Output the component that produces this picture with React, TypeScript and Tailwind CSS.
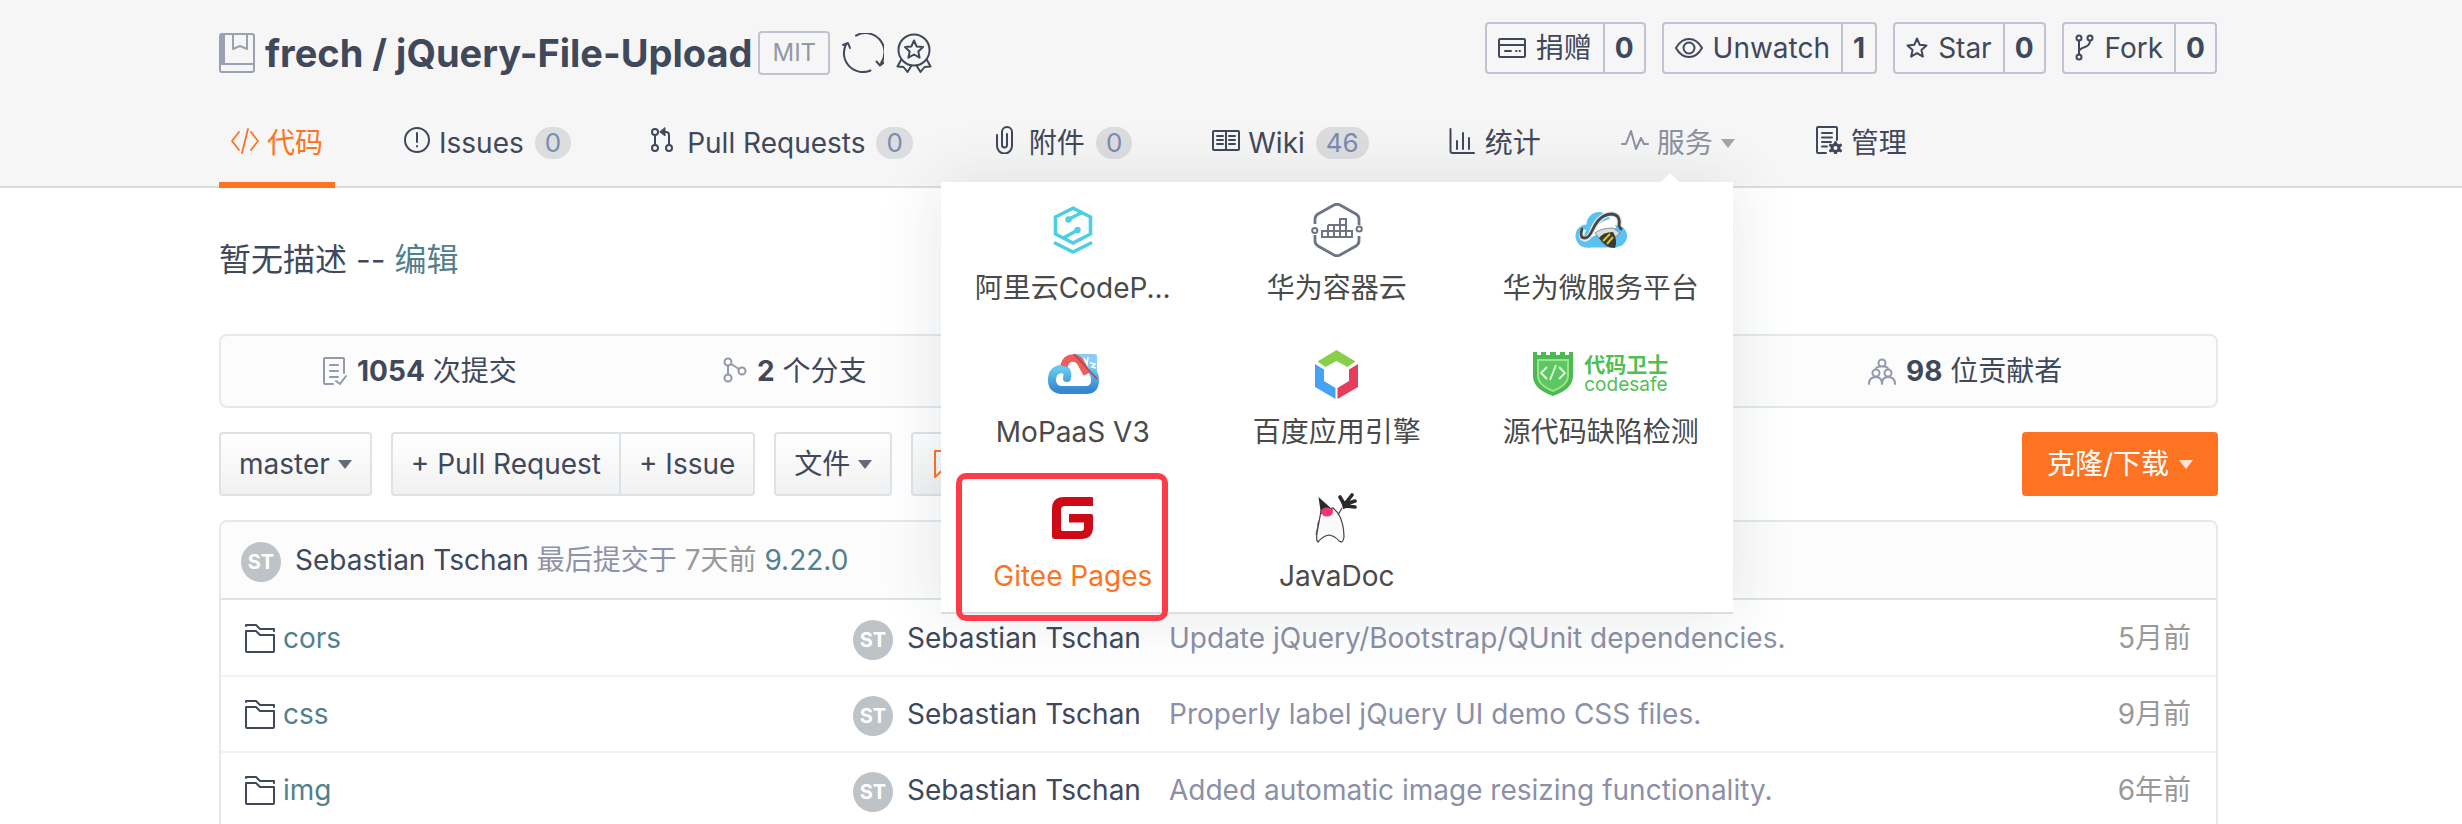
import type { ReactNode } from 'react';

const star = (cx: number, cy: number, outer: number, inner: number) =>
  Array.from({ length: 10 }, (_, i) => {
    const r = i % 2 === 0 ? outer : inner;
    const a = (Math.PI / 5) * i - Math.PI / 2;
    return `${(cx + r * Math.cos(a)).toFixed(1)},${(cy + r * Math.sin(a)).toFixed(1)}`;
  }).join(' ');

function Icon({ children, size = 28, height }: { children: ReactNode; size?: number; height?: number }) {
  return (
    <svg
      width={size}
      height={height ?? size}
      viewBox={`0 0 ${size} ${height ?? size}`}
      fill="none"
      stroke="currentColor"
      strokeWidth="2"
      strokeLinecap="round"
      strokeLinejoin="round"
      className="shrink-0"
      aria-hidden="true"
    >
      {children}
    </svg>
  );
}

const Caret = () => (
  <svg width="14" height="9" viewBox="0 0 14 9" className="shrink-0 opacity-80" aria-hidden="true">
    <path d="M0 0h14L7 9Z" fill="currentColor" />
  </svg>
);

const RepoIcon = () => (
  <Icon size={36} height={40}>
    <path d="M3 1h30a2 2 0 0 1 2 2v34a2 2 0 0 1-2 2H3a2 2 0 0 1-2-2V3a2 2 0 0 1 2-2ZM1 31h34M14 1v15l7-3 7 3V1" />
    <path d="M1 2h5v28H1Z" fill="currentColor" stroke="none" />
  </Icon>
);

const SyncIcon = () => (
  <Icon size={42} height={40}>
    <path d="M14 2.600A19 19 0 0 1 39 30M28.500 37.500A19 19 0 0 1 4.500 10.500M1 12l5-2 2 5M34.500 28.500l3.500 4 4.500-3.500" />
  </Icon>
);

const MedalIcon = () => (
  <Icon size={36} height={40}>
    <circle cx="18" cy="17" r="15.500" />
    <polygon points={star(18, 17, 9.5, 4.5)} />
    <path d="M5 27 1.500 33.500l6 .5 4 5 4-6.500M31 27l3.500 6.500-6 .5-4 5-4-6.500" />
  </Icon>
);

const CodeIcon = () => (
  <Icon>
    <path d="M8 6 1 15l7 9M20 6l7 9-7 9M17 3l-6 24" strokeWidth="1.800" />
  </Icon>
);

const IssueIcon = () => (
  <Icon>
    <circle cx="14" cy="14" r="12" />
    <path d="M14 7v9M14 20v.5" />
  </Icon>
);

const PullIcon = () => (
  <Icon>
    <circle cx="4" cy="6" r="3" />
    <circle cx="4" cy="22" r="3" />
    <circle cx="18" cy="22" r="3" />
    <path d="M4 9v10M18 19V9q0-3-3-3h-5" />
    <path d="M14 2v8L9 6Z" fill="currentColor" strokeWidth="1" />
  </Icon>
);

const ClipIcon = () => (
  <Icon>
    <path d="M4 9v11a7.500 7.500 0 0 0 15 0V6a5 5 0 0 0-10 0v13a2.500 2.500 0 0 0 5 0V8" />
  </Icon>
);

const BookIcon = () => (
  <Icon>
    <rect x="1" y="5" width="26" height="19" rx="1" />
    <path d="M14 5v19M5 10h6M5 14h6M5 18h6M17 10h6M17 14h6M17 18h6" />
  </Icon>
);

const ChartIcon = () => (
  <Icon>
    <path d="M1.500 3v22q0 2 2 2H25M8 15v8M14 7v16M20 12v11" />
  </Icon>
);

const PulseIcon = () => (
  <Icon>
    <path d="M1 18h4l5-13 5 18 5-11 3 6h4" />
  </Icon>
);

const ManageIcon = () => (
  <Icon>
    <path d="M11 27H3q-1 0-1-1V2q0-1 1-1h18q1 0 1 1v12M7 7h10M7 11.500h10M7 16h9M7 20.500h5" />
    <circle cx="20.500" cy="22" r="3.500" strokeWidth="3" />
    <path
      d="M20.500 17v-.5M20.500 27.500V27M16 19.500l-.5-.3M25.500 24.800l-.5-.3M16 24.500l-.5.3M25.500 19.200l-.5.3"
      strokeWidth="3"
    />
  </Icon>
);

const DonateIcon = () => (
  <Icon>
    <rect x="1" y="5" width="26" height="18" rx="1" />
    <path d="M1 11h26M7 17h6M18 17h.5M21.500 17h.5" />
  </Icon>
);

const EyeIcon = () => (
  <Icon>
    <path d="M1 14Q6 5 14 5t13 9q-5 9-13 9T1 14Z" />
    <circle cx="14" cy="14" r="5.500" />
  </Icon>
);

const StarIcon = () => (
  <Icon size={22} height={28}>
    <polygon points={star(11, 14.5, 10, 4.6)} />
  </Icon>
);

const ForkIcon = () => (
  <Icon size={20} height={28}>
    <circle cx="4" cy="4" r="2.500" />
    <circle cx="15" cy="4" r="2.500" />
    <circle cx="4" cy="23" r="2.500" />
    <path d="M4 6.500v14M15 6.500q0 5-5 6.500t-6 4" />
  </Icon>
);

const CommitIcon = () => (
  <Icon size={24} height={28}>
    <path d="M10 27H2q-1 0-1-1V2q0-1 1-1h18q1 0 1 1v14M7 8h8M7 14h8M7 20h8M13 24l4 3 6-8" />
  </Icon>
);

const BranchIcon = () => (
  <Icon size={24} height={28}>
    <circle cx="5" cy="5" r="3.500" />
    <circle cx="5" cy="21" r="3.500" />
    <circle cx="19" cy="14" r="3.500" />
    <path d="M5 8.500v9M8 7l8 5" />
  </Icon>
);

const PeopleIcon = () => (
  <Icon>
    <circle cx="14" cy="6" r="3.500" />
    <circle cx="8" cy="16" r="3.500" />
    <circle cx="20" cy="16" r="3.500" />
    <path d="M1 27q0-7 7-7 6 0 6 7 0-7 6-7 7 0 7 7M8 12q0-2 4-2.500M20 12q0-2-4-2.500" />
  </Icon>
);

const FolderIcon = () => (
  <Icon size={30}>
    <path d="M1 8h10l4 4h14v16q0 1-1 1H2q-1 0-1-1ZM1 3V2h10l4 4h14v2" />
  </Icon>
);

const AliyunLogo = () => (
  <svg width="40" height="48" viewBox="0 0 40 48" fill="none" stroke="#4cd0e1" strokeWidth="3.600">
    <path d="M20 2.200 37.500 11v17L20 37 2.500 28V11ZM15 13.500 29 6.500M24 24.500 11 31.500M1 36.500 20 46l19-9.500" />
    <circle cx="15.500" cy="13.500" r="3.200" fill="#4cd0e1" stroke="none" />
    <circle cx="24.500" cy="24" r="3.200" fill="#4cd0e1" stroke="none" />
  </svg>
);

const ContainerLogo = () => (
  <svg width="52" height="54" viewBox="0 0 52 54" fill="none" stroke="#6e7486" strokeWidth="2.800">
    <path d="M4 21v-5q0-3 3-5l16-9q3-1.500 6 0l16 9q3 2 3 5v6M4 32v6q0 3 3 5l16 9q3 1.500 6 0l16-9q3-2 3-5v-5" />
    <g strokeWidth="2">
      <circle cx="3.800" cy="27.500" r="2.600" />
      <circle cx="48.200" cy="26" r="2.600" />
      <path d="M11 28h30v6H11ZM17 22h18v12M17 22v12M23 22v12M29 34V16h6v18M29 22h6" />
    </g>
  </svg>
);

const BeeLogo = () => (
  <svg width="52" height="38" viewBox="0 0 52 38">
    <g fill="#5bc1f0">
      <circle cx="12" cy="25" r="11.500" />
      <circle cx="24" cy="13.500" r="12.500" />
      <circle cx="41" cy="25" r="11" />
      <path d="M12 20h30v16.500H12Z" />
    </g>
    <path d="M15 27q5-15 19-19 6 1 7 9l-10 3-10 4Z" fill="#fff" />
    <path d="M9 18q-5 9 1 10 4 0 8-10 7-15 19-15 9 1 7 12" fill="none" stroke="#e6e9ec" strokeWidth="5.500" />
    <path
      d="M7 18q-3 9 3 9 4 0 8-9 7-15 19-15 9 1 7 12l2 3"
      fill="none"
      stroke="#474747"
      strokeWidth="2.800"
      strokeLinecap="round"
    />
    <path d="M20 22q6-5 18-5l7 5-6 5-14 1Z" fill="#d8dde0" stroke="#777" strokeWidth=".8" />
    <path d="M24 27q4-6 14-6 5 8 2 16-10 0-16-10Z" fill="#3b3830" />
    <path d="m28 30 7-7M32 33l6-7" stroke="#d8c72b" strokeWidth="2" />
  </svg>
);

const MopaasLogo = () => (
  <svg width="52" height="42" viewBox="0 0 52 42" fill="none">
    <defs>
      <linearGradient id="mopaas" x1="0" y1="0" x2="0" y2="1">
        <stop offset="0" stopColor="#66c7ef" />
        <stop offset="1" stopColor="#3787d0" />
      </linearGradient>
    </defs>
    <path d="M26 1h22q2 0 2 2v24Z" fill="#8bcdf2" />
    <path
      d="M45 18q3 4 3 9 0 10-9 10H14Q5 36 5 27q0-10 9-11 8 0 6 9"
      stroke="url(#mopaas)"
      strokeWidth="8"
      strokeLinecap="round"
    />
    <path d="M17 13q2-8 9-8 6 0 9 7l5 9" stroke="#ee5c5c" strokeWidth="7.500" />
    <path d="M27 1 50 26" stroke="#a44a55" strokeWidth="1.500" />
    <path d="m37 5 3 6 1-7M43 10l5 1-3 3 4 1" stroke="#fff" strokeWidth="1.600" />
  </svg>
);

const BaiduLogo = () => (
  <svg width="43" height="49" viewBox="0 0 43 49">
    <path d="m21.500 0 19 11.500-8 5.500-11-6-11 6-8-5.500Z" fill="#88cf4c" />
    <path d="m0 14 9 5.500V31l11.500 7v11L0 37Z" fill="#45a3f5" />
    <path d="m43 14-9 5.500V31l-11.500 7v11L43 37Z" fill="#e63d5c" />
  </svg>
);

const CodesafeLogo = () => (
  <span className="flex items-center gap-[11px] text-[#4fbf56]">
    <svg width="40" height="44" viewBox="0 0 40 44" fill="none">
      <path d="M0 0h4v3h4V0h5v3h4V0h6v3h4V0h5v3h4V0h4v24q0 13-20 20Q0 37 0 24Z" fill="#4cba50" />
      <path d="M5 8h30v16q0 9-15 15Q5 33 5 24Z" fill="#5ec763" stroke="#9ae28e" strokeWidth="2" />
      <path d="m14 15-6 6 6 6M26 15l6 6-6 6M23 13l-6 15" stroke="#e6fbe2" strokeWidth="1.800" />
    </svg>
    <span className="flex flex-col text-left">
      <span className="text-[21px] leading-[22px] font-bold">代码卫士</span>
      <span className="text-[19px] leading-[18px]">codesafe</span>
    </span>
  </span>
);

const GiteeLogo = () => (
  <svg width="42" height="42" viewBox="0 0 42 42">
    <path
      d="M12 0h28q1 0 1 1v8H13q-4 0-4 4v19q0 2 2 2h18q3 0 3-3v-5.500H17V17h22q2 0 2 2v11q0 12-12 12H3q-3 0-3-3V12Q0 0 12 0Z"
      fill="#cd0a16"
    />
  </svg>
);

const DukeLogo = () => (
  <svg width="44" height="50" viewBox="0 0 44 50" fill="none">
    <path d="M6 26q-4 4-3 7l-2 9" stroke="#555" strokeWidth="1.200" />
    <path
      d="M6 18 2 40q-1 8 1 9 5-6 11-7 6 1 10 6 4 3 5-4 0-14-6-24l-5-5Z"
      fill="#f9f9f9"
      stroke="#444"
      strokeWidth="1.200"
    />
    <path d="M3.500 4 18 17l-3 3-9 1Z" fill="#2b2b2b" />
    <ellipse cx="12" cy="19" rx="6" ry="4.500" fill="#f43380" />
    <path d="m23 22 4-7" stroke="#444" strokeWidth="1.200" />
    <path
      d="m29 11-4-7M30 11l7-9M31 11l9-3M31 13l9 1"
      stroke="#2b2b2b"
      strokeWidth="3.600"
      strokeLinecap="round"
    />
    <path d="m26 8 8 0 1 6-7 2Z" fill="#2b2b2b" />
  </svg>
);

const services = [
  { name: '阿里云CodeP...', logo: <AliyunLogo /> },
  { name: '华为容器云', logo: <ContainerLogo /> },
  { name: '华为微服务平台', logo: <BeeLogo /> },
  { name: 'MoPaaS V3', logo: <MopaasLogo /> },
  { name: '百度应用引擎', logo: <BaiduLogo /> },
  { name: '源代码缺陷检测', logo: <CodesafeLogo /> },
  { name: 'Gitee Pages', logo: <GiteeLogo />, active: true },
  { name: 'JavaDoc', logo: <DukeLogo /> },
];

function ServicesMenu() {
  return (
    <div className="absolute top-[84px] right-[14px] z-10 w-[792px] bg-white shadow-[inset_0_-2px_0_#dcdddf,0_0_60px_rgba(39,54,78,0.12)]">
      <svg width="20" height="10" viewBox="0 0 20 10" className="absolute -top-[9px] right-[53px]" aria-hidden="true">
        <path d="M10 0 20 10H0Z" fill="#fff" />
      </svg>
      <ul className="grid grid-cols-3">
        {services.map((s) => (
          <li key={s.name} className="relative h-36">
            <a
              href="#"
              className={`flex flex-col items-center gap-3 pt-[22px] ${s.active ? 'text-[#fe7321]' : 'text-[#4a4a4a]'}`}
            >
              <span className="flex h-[52px] items-center">{s.logo}</span>
              <span className="leading-10">{s.name}</span>
            </a>
            {s.active && (
              <span className="pointer-events-none absolute top-[3px] left-[15px] h-[148px] w-[212px] rounded-[10px] border-[6px] border-[#ff3b4a]" />
            )}
          </li>
        ))}
      </ul>
    </div>
  );
}

const tabs = [
  { label: '代码', icon: <CodeIcon />, state: 'active' },
  { label: 'Issues', icon: <IssueIcon />, count: 0 },
  { label: 'Pull Requests', icon: <PullIcon />, count: 0 },
  { label: '附件', icon: <ClipIcon />, count: 0 },
  { label: 'Wiki', icon: <BookIcon />, count: 46 },
  { label: '统计', icon: <ChartIcon /> },
  { label: '服务', icon: <PulseIcon />, state: 'open' },
  { label: '管理', icon: <ManageIcon /> },
];

const tabStyle: Record<string, string> = {
  active: 'border-[#fe7321] text-[#fe7321]',
  open: 'border-transparent text-[#8c92a0]',
  idle: 'border-transparent text-[#40485b]',
};

const actions = [
  { label: '捐赠', icon: <DonateIcon />, count: 0 },
  { label: 'Unwatch', icon: <EyeIcon />, count: 1 },
  { label: 'Star', icon: <StarIcon />, count: 0 },
  { label: 'Fork', icon: <ForkIcon />, count: 0 },
];

const files = [
  { name: 'cors', message: 'Update jQuery/Bootstrap/QUnit dependencies.', time: '5月前' },
  { name: 'css', message: 'Properly label jQuery UI demo CSS files.', time: '9月前' },
  { name: 'img', message: 'Added automatic image resizing functionality.', time: '6年前' },
];

const Avatar = () => (
  <span className="mt-1 flex size-10 shrink-0 items-center justify-center rounded-full bg-[#bdc3c7] text-xl font-bold text-white">
    ST
  </span>
);

function Stat({ icon, value, unit }: { icon: ReactNode; value: number; unit: string }) {
  return (
    <a href="#" className="flex items-center justify-center gap-[10px]">
      <span className="text-[#9499ad]">{icon}</span>
      <span>
        <strong>{value}</strong> {unit}
      </span>
    </a>
  );
}

const toolButton = 'flex h-16 items-center gap-2 border-2 border-[#dbe3e8] bg-linear-to-b from-white to-[#f1f1f1]';

export default function App() {
  return (
    <div className="h-screen overflow-hidden bg-white font-[Inter,'Noto_Sans_CJK_SC',sans-serif] text-[28px] leading-9 whitespace-nowrap text-[#40485b]">
      <header className="border-b-2 border-[#dcdddf] bg-[#f6f6f6] pt-[22px] pr-[245px] pl-[219px]">
        <div className="flex h-[54px] items-start justify-between">
          <div className="flex h-[62px] items-center">
            <span className="text-[#9ba1b3]">
              <RepoIcon />
            </span>
            <h1 className="ml-[10px] text-[38px] leading-[44px] font-bold">
              <a href="#">frech</a> / <a href="#">jQuery-File-Upload</a>
            </h1>
            <span className="ml-1.5 flex h-11 items-center rounded border-2 border-[#c0c4d1] px-3 text-2xl text-[#9297aa]">
              MIT
            </span>
            <button type="button" aria-label="Sync" className="ml-3">
              <SyncIcon />
            </button>
            <button type="button" aria-label="Recommend" className="ml-3">
              <MedalIcon />
            </button>
          </div>
          <div className="flex gap-4">
            {actions.map((a) => (
              <div key={a.label} className="flex h-[52px] rounded border-2 border-[#c0c4d1]">
                <button type="button" className="flex items-center gap-[10px] px-[11px]">
                  {a.icon}
                  {a.label}
                </button>
                <a href="#" className="flex items-center border-l-2 border-[#c0c4d1] px-[10px] font-bold">
                  {a.count}
                </a>
              </div>
            ))}
          </div>
        </div>
        <nav className="mt-[22px] -mb-0.5">
          <ul className="flex gap-14">
            {tabs.map((t) => (
              <li key={t.label} className="relative">
                <a
                  href="#"
                  className={`flex h-[90px] items-center gap-2 border-b-[6px] px-3 pt-1.5 ${tabStyle[t.state ?? 'idle']}`}
                >
                  <span className="mb-1.5">{t.icon}</span>
                  {t.label}
                  {t.count !== undefined && (
                    <span className="ml-[3px] flex h-8 items-center rounded-full bg-[#dcdddf] px-[10px] text-[26px] text-[#7c8bb0]">
                      {t.count}
                    </span>
                  )}
                  {t.state === 'open' && <Caret />}
                </a>
                {t.state === 'open' && <ServicesMenu />}
              </li>
            ))}
          </ul>
        </nav>
      </header>

      <main className="pr-[244px] pl-[219px]">
        <p className="pt-[50px] text-[32px] leading-[44px]">
          暂无描述 -- <a href="#" className="text-[#51808f]">编辑</a>
        </p>

        <section className="mt-[52px] grid h-[74px] grid-cols-[398fr_352fr_744fr_502fr] rounded-lg border-2 border-[#e3e9ed] bg-[#fcfcfc]">
          <Stat icon={<CommitIcon />} value={1054} unit="次提交" />
          <Stat icon={<BranchIcon />} value={2} unit="个分支" />
          <span />
          <Stat icon={<PeopleIcon />} value={98} unit="位贡献者" />
        </section>

        <div className="mt-6 flex items-center gap-[19px]">
          <button type="button" className={`${toolButton} rounded px-[18px]`}>
            master <Caret />
          </button>
          <div className="flex">
            <button type="button" className={`${toolButton} rounded-l px-[18px]`}>
              + Pull Request
            </button>
            <button type="button" className={`${toolButton} -ml-0.5 rounded-r px-[18px]`}>
              + Issue
            </button>
          </div>
          <button type="button" className={`${toolButton} rounded px-[18px]`}>
            文件 <Caret />
          </button>
          <button type="button" aria-label="Bookmark" className={`${toolButton} rounded px-5 text-[#fe7321]`}>
            <Icon>
              <path d="M2 1h22v26l-11-10L2 27Z" />
            </Icon>
          </button>
          <button
            type="button"
            className="ml-auto flex h-16 items-center gap-[10px] rounded bg-[#fe7321] px-[25px] text-white"
          >
            克隆/下载 <Caret />
          </button>
        </div>

        <section className="mt-6 rounded-t-lg border-2 border-[#e3e9ed]">
          <div className="flex h-[78px] items-center rounded-t-lg border-b-2 border-[#dbe3e8] bg-[#fcfcfc] pl-5">
            <Avatar />
            <span className="ml-[14px]">
              <a href="#">Sebastian Tschan</a> <span className="text-[#9093a8]">最后提交于</span>{' '}
              <span className="text-[#999]">7天前</span> <a href="#" className="text-[#51808f]">9.22.0</a>
            </span>
          </div>
          <table className="w-full table-fixed">
            <colgroup>
              <col className="w-[632px]" />
              <col className="w-[316px]" />
              <col />
              <col className="w-[140px]" />
            </colgroup>
            <tbody>
              {files.map((f) => (
                <tr key={f.name} className="h-[76px] border-b-2 border-[#eff3f6]">
                  <td className="pl-6">
                    <a href="#" className="flex items-center gap-2 text-[#51808f]">
                      <span className="text-[#40485b]">
                        <FolderIcon />
                      </span>
                      {f.name}
                    </a>
                  </td>
                  <td>
                    <span className="flex items-center gap-[14px]">
                      <Avatar />
                      <a href="#">Sebastian Tschan</a>
                    </span>
                  </td>
                  <td className="text-[#8c90a6]">{f.message}</td>
                  <td className="pr-[25px] text-right text-[#999]">{f.time}</td>
                </tr>
              ))}
            </tbody>
          </table>
        </section>
      </main>
    </div>
  );
}
